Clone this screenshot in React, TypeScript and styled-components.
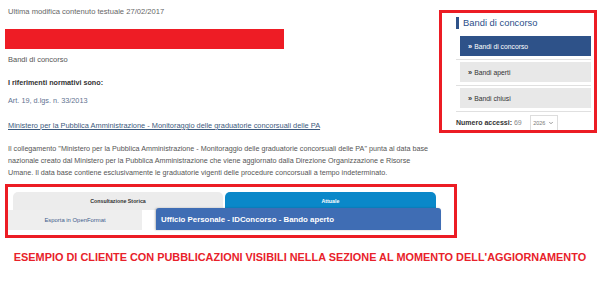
import React from 'react';
import styled, { createGlobalStyle } from 'styled-components';
import { ChevronDown } from 'lucide-react';

const GlobalStyle = createGlobalStyle`
  html, body {
    margin: 0;
    padding: 0;
    background: #fff;
  }
  body {
    font-family: 'Liberation Sans', Arial, sans-serif;
    color: #555;
    width: 600px;
    height: 283px;
    overflow: hidden;
  }
`;

const Page = styled.div`
  width: 600px;
  height: 283px;
`;

const TopRow = styled.div`
  display: flex;
  justify-content: space-between;
  height: 138px;
`;

const Main = styled.div`
  padding: 6px 0 0 8px;
  display: flex;
  flex-direction: column;
`;

const Meta = styled.div`
  font-size: 7.6px;
  line-height: 12px;
  color: #666;
`;

const RedBar = styled.div`
  margin: 11px 0 0 -3px;
  width: 279px;
  height: 20px;
  background: #ee1c25;
`;

const Crumb = styled.div`
  margin-top: 5px;
  font-size: 7.5px;
  line-height: 12px;
  color: #555;
`;

const Label = styled.div`
  margin-top: 11px;
  font-size: 7.2px;
  line-height: 12px;
  font-weight: bold;
  color: #333;
`;

const Ref = styled.a<{ $underline?: boolean; $top: number }>`
  display: block;
  margin-top: ${(p) => p.$top}px;
  font-size: ${(p) => (p.$underline ? 7.4 : 7.3)}px;
  line-height: 12px;
  color: ${(p) => (p.$underline ? '#3c5a7e' : '#5f7391')};
  text-decoration: ${(p) => (p.$underline ? 'underline' : 'none')};
  white-space: nowrap;
`;

const Sidebar = styled.aside`
  margin: 10px 3px 0 0;
  width: 158px;
  height: 123px;
  box-sizing: border-box;
  border: 3px solid #ec1c24;
  padding: 0 3px 0 14px;
  display: flex;
  flex-direction: column;
`;

const SideTitle = styled.div`
  margin-top: 2px;
  display: flex;
  align-items: center;
  gap: 4px;
  font-size: 9.4px;
  line-height: 16px;
  color: #2d4f8a;
  &::before {
    content: '';
    width: 3px;
    height: 12px;
    background: #2e5289;
  }
`;

const SideItem = styled.div<{ $first?: boolean }>`
  margin-top: ${(p) => (p.$first ? 3 : 0)}px;
  padding: 2px 0 3px 4px;
  border-bottom: 1px solid #e0e0e0;
`;

const SideButton = styled.div<{ $active?: boolean }>`
  height: 20px;
  display: flex;
  align-items: center;
  padding-left: 8px;
  font-size: 6.8px;
  color: ${(p) => (p.$active ? '#fff' : '#333')};
  background: ${(p) => (p.$active ? '#2e5289' : '#e8e8e8')};
  b {
    margin-right: 2px;
    font-size: 7.4px;
  }
`;

const Counter = styled.div`
  flex: 1;
  display: flex;
  align-items: flex-end;
  font-size: 7px;
  color: #888;
  span {
    line-height: 15px;
  }
  strong {
    color: #333;
  }
`;

const YearSelect = styled.div`
  margin: 0 0 0 8px;
  width: 28px;
  height: 15px;
  box-sizing: border-box;
  border: 1px solid #ddd;
  border-bottom: none;
  display: flex;
  align-items: center;
  justify-content: center;
  gap: 3px;
  font-size: 5.5px;
  color: #777;
`;

const Paragraph = styled.p`
  margin: 5px 0 0 8px;
  font-size: 7.2px;
  line-height: 12px;
  color: #555;
  white-space: nowrap;
`;

const Frame = styled.div`
  margin: 5px 0 0 5px;
  width: 446px;
  border: 3px solid #ec1c24;
  padding: 5px 0;
`;

const TabRow = styled.div`
  display: flex;
  padding-left: 5px;
  gap: 2px;
`;

const Tab = styled.div<{ $active?: boolean; $w: number }>`
  width: ${(p) => p.$w}px;
  height: 18px;
  border-radius: 5px 5px 0 0;
  display: flex;
  align-items: center;
  justify-content: center;
  font-size: 5.3px;
  font-weight: bold;
  color: ${(p) => (p.$active ? '#fff' : '#333')};
  background: ${(p) => (p.$active ? '#0a88c9' : '#ececec')};
`;

const SubRow = styled.div`
  display: flex;
  align-items: flex-end;
`;

const SubTab = styled.div`
  width: 134px;
  height: 20px;
  display: flex;
  align-items: center;
  justify-content: center;
  font-size: 5.9px;
  color: #3f5c8c;
  background: #eeeeee;
`;

const Heading = styled.div`
  margin: -3px 0 0 14px;
  width: 285px;
  height: 22px;
  box-sizing: border-box;
  padding-left: 5px;
  display: flex;
  align-items: center;
  border-radius: 3px 3px 0 0;
  background: #3f6db4;
  box-shadow: -1px 0 2px rgba(0, 0, 0, 0.25);
  color: #fff;
  font-size: 7.85px;
  font-weight: bold;
  white-space: nowrap;
`;

const Notice = styled.div`
  margin-top: 13px;
  text-align: center;
  font-size: 10.9px;
  font-weight: bold;
  color: #e8212a;
  white-space: nowrap;
`;

const sideLinks = ['Bandi di concorso', 'Bandi aperti', 'Bandi chiusi'];

export default function App() {
  return (
    <Page>
      <GlobalStyle />
      <TopRow>
        <Main>
          <Meta>Ultima modifica contenuto testuale 27/02/2017</Meta>
          <RedBar />
          <Crumb>Bandi di concorso</Crumb>
          <Label>I riferimenti normativi sono:</Label>
          <Ref $top={6}>Art. 19, d.lgs. n. 33/2013</Ref>
          <Ref $top={13} $underline>
            Ministero per la Pubblica Amministrazione - Monitoraggio delle graduatorie concorsuali delle PA
          </Ref>
        </Main>
        <Sidebar>
          <SideTitle>Bandi di concorso</SideTitle>
          {sideLinks.map((label, i) => (
            <SideItem key={label} $first={i === 0}>
              <SideButton $active={i === 0}>
                <b>»</b> {label}
              </SideButton>
            </SideItem>
          ))}
          <Counter>
            <span>
              <strong>Numero accessi:</strong> 69
            </span>
            <YearSelect>
              2026 <ChevronDown size={6} strokeWidth={3} />
            </YearSelect>
          </Counter>
        </Sidebar>
      </TopRow>
      <Paragraph>
        Il collegamento "Ministero per la Pubblica Amministrazione - Monitoraggio delle graduatorie concorsuali delle PA" punta al data base
        <br />
        nazionale creato dal Ministero per la Pubblica Amministrazione che viene aggiornato dalla Direzione Organizzazione e Risorse
        <br />
        Umane. Il data base contiene esclusivamente le graduatorie vigenti delle procedure concorsuali a tempo indeterminato.
      </Paragraph>
      <Frame>
        <TabRow>
          <Tab $w={210}>Consultazione Storica</Tab>
          <Tab $w={211} $active>
            Attuale
          </Tab>
        </TabRow>
        <SubRow>
          <SubTab>Esporta in OpenFormat</SubTab>
          <Heading>Ufficio Personale - IDConcorso - Bando aperto</Heading>
        </SubRow>
      </Frame>
      <Notice>ESEMPIO DI CLIENTE CON PUBBLICAZIONI VISIBILI NELLA SEZIONE AL MOMENTO DELL'AGGIORNAMENTO</Notice>
    </Page>
  );
}
